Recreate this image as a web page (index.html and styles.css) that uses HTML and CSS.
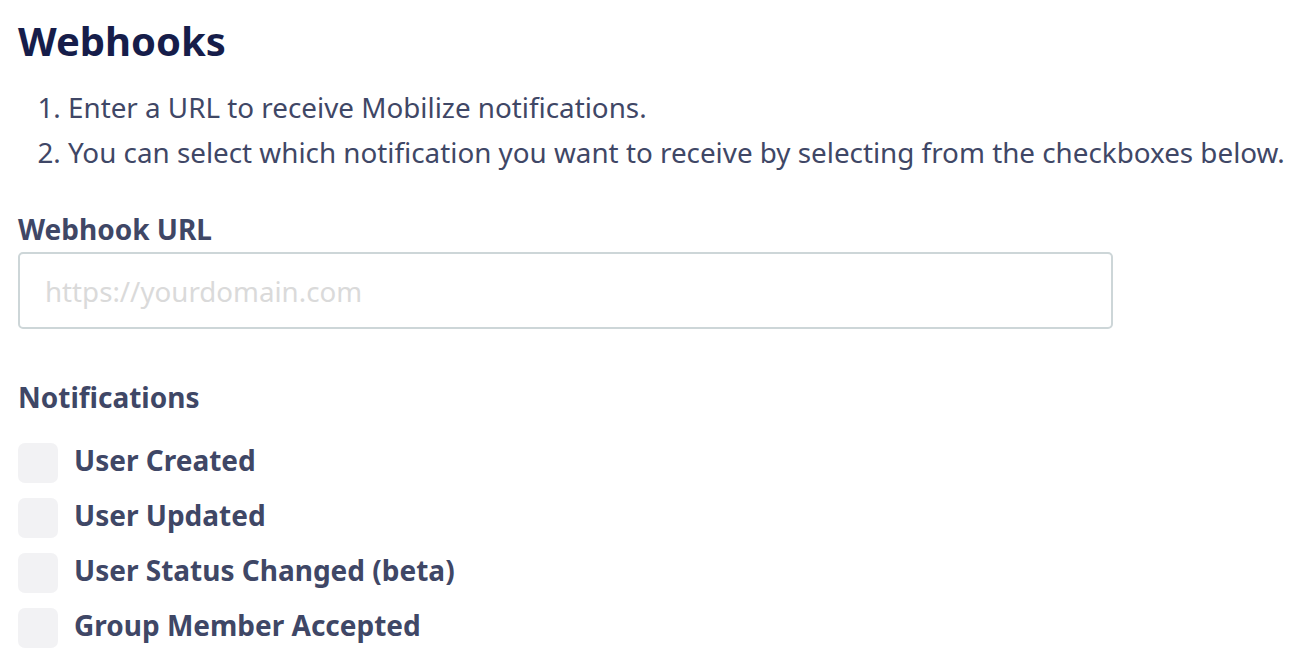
FILE: index.html
```html
<!DOCTYPE html>
<html>
<head>
<meta charset="utf-8">
<link rel="stylesheet" href="styles.css">
</head>
<body>
<div class="page">
  <h1 class="title">Webhooks</h1>
  <ol class="steps">
    <li>Enter a URL to receive Mobilize notifications.</li>
    <li>You can select which notification you want to receive by selecting from the checkboxes below.</li>
  </ol>
  <label class="field-label" for="url">Webhook URL</label>
  <input id="url" class="url-input" type="text" placeholder="https://yourdomain.com">
  <div class="section-label">Notifications</div>
  <div class="checks">
    <label class="check"><span class="box"></span><span class="check-text">User Created</span></label>
    <label class="check"><span class="box"></span><span class="check-text">User Updated</span></label>
    <label class="check"><span class="box"></span><span class="check-text">User Status Changed (beta)</span></label>
    <label class="check"><span class="box"></span><span class="check-text">Group Member Accepted</span></label>
  </div>
</div>
</body>
</html>
```

FILE: styles.css
```css
html, body {
  margin: 0;
  padding: 0;
  background: #ffffff;
}
body {
  font-family: "Noto Sans", "Open Sans", sans-serif;
  color: #3f4766;
}
.page {
  padding: 14px 18px 0 18px;
  display: flex;
  flex-direction: column;
  align-items: flex-start;
}
.title {
  margin: 0;
  font-size: 40px;
  line-height: 54px;
  font-weight: 700;
  color: #161d4a;
}
.steps {
  margin: 17px 0 0 0;
  padding-left: 50px;
  font-size: 27.8px;
  line-height: 45px;
}
.field-label {
  margin-top: 36px;
  font-size: 28px;
  line-height: 36px;
  font-weight: 700;
}
.url-input {
  margin-top: 5px;
  box-sizing: border-box;
  width: 1095px;
  height: 77px;
  border: 2px solid #cdd6d8;
  border-radius: 5px;
  padding: 0 25px;
  font-family: "Noto Sans", "Open Sans", sans-serif;
  font-size: 27.7px;
  color: #3f4766;
  outline: none;
}
.url-input::placeholder {
  color: #dadada;
}
.section-label {
  margin-top: 50px;
  font-size: 28px;
  line-height: 36px;
  font-weight: 700;
}
.checks {
  margin-top: 28px;
  display: flex;
  flex-direction: column;
  gap: 15px;
}
.check {
  display: flex;
  align-items: flex-start;
  gap: 16px;
}
.box {
  flex: none;
  width: 40px;
  height: 40px;
  border-radius: 7px;
  background: #f2f2f4;
}
.check-text {
  font-size: 28px;
  line-height: 34px;
  font-weight: 700;
}
```
